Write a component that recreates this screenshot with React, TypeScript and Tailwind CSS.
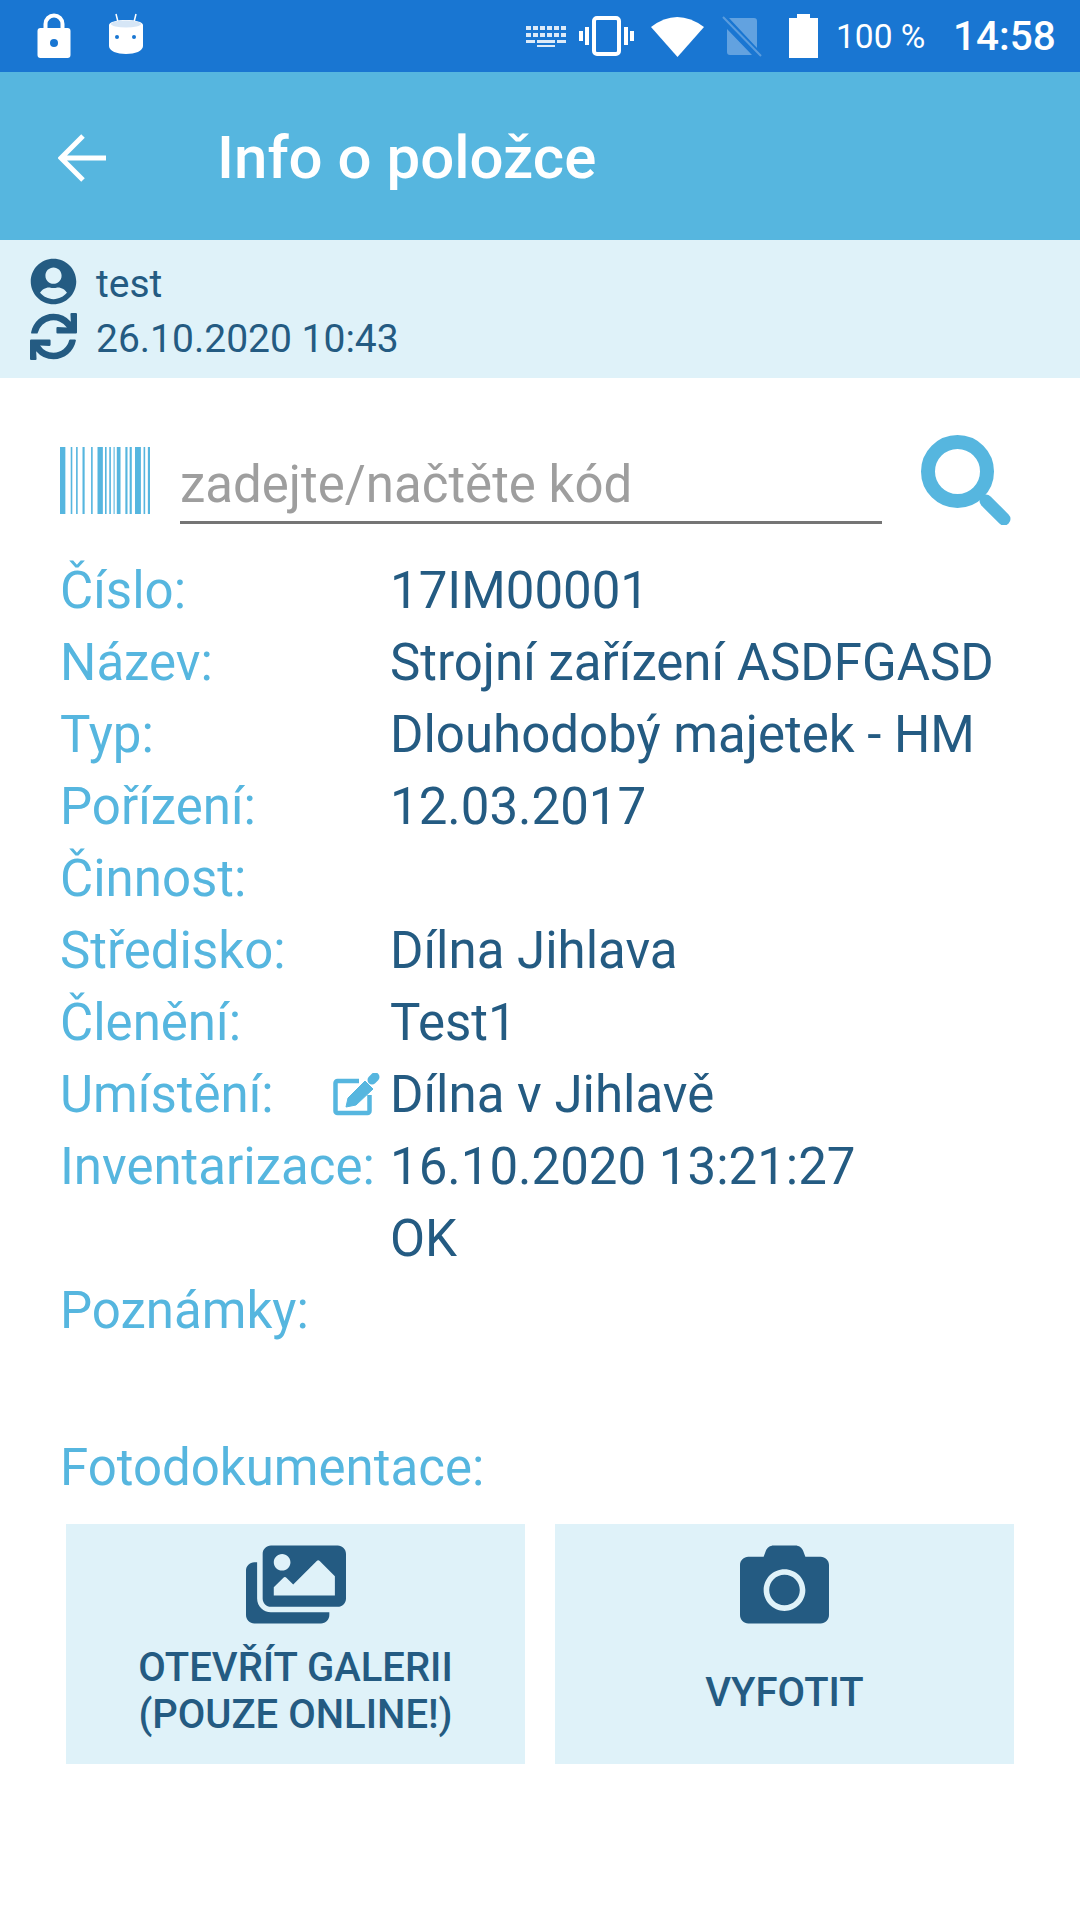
import { FaUserCircle, FaSync, FaImages, FaCamera } from 'react-icons/fa'

// bar x/width pairs of the barcode, in px from its left edge
const BARS = [[0,5],[10,1.500],[15,1.500],[21,2],[29,1.500],[35,5],[42,1.500],[46,1.500],[50,1],[53,3.500],[61,2],[65,2],[70,5.500],[78,1.500],[82,2]]

const ROWS: { label: string; value?: string; edit?: boolean }[] = [
  { label: 'Číslo:', value: '17IM00001' },
  { label: 'Název:', value: 'Strojní zařízení ASDFGASD' },
  { label: 'Typ:', value: 'Dlouhodobý majetek - HM' },
  { label: 'Pořízení:', value: '12.03.2017' },
  { label: 'Činnost:' },
  { label: 'Středisko:', value: 'Dílna Jihlava' },
  { label: 'Členění:', value: 'Test1' },
  { label: 'Umístění:', value: 'Dílna v Jihlavě', edit: true },
  { label: 'Inventarizace:', value: '16.10.2020 13:21:27' },
  { label: '', value: 'OK' },
  { label: 'Poznámky:' },
]

function StatusBar() {
  return (
    <div className="h-[72px] bg-[#1976d2] flex items-center text-white shrink-0">
      <svg className="ml-[37px] w-[34px] h-[45px] -mt-[2px]" viewBox="0 0 33 45" fill="white">
        <path d="M3 15h3v-4a10.500 10.500 0 0 1 21 0v4h3a3 3 0 0 1 3 3v24a3 3 0 0 1-3 3H3a3 3 0 0 1-3-3V18a3 3 0 0 1 3-3zM10 15h13v-4a6.500 6.500 0 0 0-13 0z" fillRule="evenodd" />
        <circle cx="16.500" cy="30" r="4" fill="#1976d2" />
      </svg>
      <svg className="ml-[38px] w-[34px] h-[41px] -mt-[6px]" viewBox="0 0 34 41">
        <path d="M7 1l2 8M27 1l-2 8" stroke="white" strokeWidth="1.500" />
        <path d="M0 12c0-3 8-5 17-5s17 2 17 5v21c0 5-8 8-17 8S0 38 0 33z" fill="white" />
        <ellipse cx="17" cy="11" rx="15" ry="3.500" fill="#d6e6f6" />
        <circle cx="8" cy="24" r="2" fill="#1976d2" />
        <circle cx="25" cy="24" r="2" fill="#1976d2" />
      </svg>
      <svg className="ml-[383px] w-[40px] h-[21px]" viewBox="0 0 40 21" fill="white" opacity="0.85">
        <path d="M0 0h5v4H0zM7 0h5v4H7zM14 0h5v4h-5zM21 0h5v4h-5zM28 0h5v4h-5zM35 0h5v4h-5zM0 7h5v4H0zM7 7h5v4H7zM14 7h5v4h-5zM21 7h5v4h-5zM28 7h5v4h-5zM35 7h5v4h-5zM0 14h9v3H0zM31 14h9v3h-9zM11 14h18v3H11zM11 19h18v2H11z" />
      </svg>
      <svg className="ml-[13px] w-[55px] h-[40px]" viewBox="0 0 55 40" fill="none" stroke="white" strokeWidth="4">
        <rect x="15" y="2" width="25" height="36" rx="3" />
        <path d="M8 11v18M2 15v10M47 11v18M53 15v10" />
      </svg>
      <svg className="ml-[17px] w-[53px] h-[41px]" viewBox="0 0 53 41" fill="white">
        <path d="M0 11Q26-9 53 11L26.500 41z" />
      </svg>
      <svg className="ml-[18px] w-[40px] h-[41px]" viewBox="0 0 40 41">
        <path d="M7 2h25a3 3 0 0 1 3 3v27zM5 13l25 26H8a3 3 0 0 1-3-3z" fill="white" opacity="0.32" />
        <path d="M1 1l38 39" stroke="white" strokeWidth="2" opacity="0.28" />
      </svg>
      <svg className="ml-[27px] w-[29px] h-[44px]" viewBox="0 0 29 44" fill="white">
        <path d="M8 0h13v4h8v40H0V4h8z" />
      </svg>
      <span className="ml-[18px] mt-[1px] text-[33.500px] leading-none font-normal w-[117px] whitespace-nowrap">100 %</span>
      <span className="mt-[1px] text-[40.500px] leading-none font-medium whitespace-nowrap">14:58</span>
    </div>
  )
}

export default function App() {
  return (
    <div className="w-[1080px] h-[1920px] bg-white flex flex-col font-['Roboto',sans-serif] overflow-hidden">
      <StatusBar />

      <div className="h-[168px] bg-[#56b6df] flex items-center shrink-0">
        <svg className="ml-[58px] w-[48px] h-[48px] mt-[3px]" viewBox="0 0 48 48" fill="none" stroke="white" strokeWidth="5">
          <path d="M48 24H4M25 2L3 24l22 22" />
        </svg>
        <span className="ml-[111px] mt-[4px] text-[60px] leading-none font-medium text-white whitespace-nowrap">Info o položce</span>
      </div>

      <div className="h-[138px] bg-[#dff2f9] pl-[30px] pt-[20px] text-[#245b82] text-[39px] leading-[48px] shrink-0">
        <div className="flex items-center h-[48px]">
          <FaUserCircle className="w-[47px] h-[47px] -mt-[5px]" />
          <span className="ml-[19px]">test</span>
        </div>
        <div className="flex items-center h-[48px] mt-[7px]">
          <FaSync className="w-[47px] h-[47px] -mt-[6px]" />
          <span className="ml-[19px]">26.10.2020 10:43</span>
        </div>
      </div>

      <div className="flex items-start pl-[60px] pt-[57px] h-[177px] shrink-0">
        <svg className="w-[90px] h-[67px] mt-[12px]" viewBox="0 0 84 67" preserveAspectRatio="none" fill="#56b6df">
          {BARS.map(([x, w]) => <rect key={x} x={x} width={w} height="67" />)}
        </svg>
        <div className="ml-[30px] w-[702px] h-[89px] border-b-[3px] border-[#757575] text-[51px] leading-[70px] pt-[15px] text-[#9e9e9e] whitespace-nowrap">zadejte/načtěte kód</div>
        <svg className="ml-[39px] w-[90px] h-[90px]" viewBox="0 0 90 90" fill="none" stroke="#56b6df">
          <circle cx="36.500" cy="36.500" r="29.500" strokeWidth="14" />
          <path d="M65 66l18 18" strokeWidth="13" strokeLinecap="round" />
        </svg>
      </div>

      <div className="pl-[60px] text-[51px] leading-[72px] shrink-0">
        {ROWS.map((r, i) => (
          <div key={i} className="flex h-[72px]">
            <div className="w-[321px] mr-[9px] flex justify-between items-center text-[#56b6df] whitespace-nowrap">
              <span>{r.label}</span>
              {r.edit && (
                <svg className="w-[48px] h-[43px] -mt-[2px]" viewBox="0 0 48 43" fill="none" stroke="#56b6df">
                  <path d="M26 8H4.500a2 2 0 0 0-2 2v28a2 2 0 0 0 2 2h30a2 2 0 0 0 2-2V22" strokeWidth="4.500" />
                  <path d="M13 34l2-9L32 8l8 8-17 16z" fill="#56b6df" strokeWidth="1" strokeLinejoin="round" />
                  <path d="M39 7l3-3" strokeWidth="9" strokeLinecap="round" />
                </svg>
              )}
            </div>
            <span className="text-[#245b82] whitespace-nowrap">{r.value}</span>
          </div>
        ))}
      </div>

      <div className="pl-[60px] mt-[85px] text-[51px] leading-[72px] text-[#56b6df] shrink-0">Fotodokumentace:</div>

      <div className="flex gap-[30px] pl-[66px] mt-[20px] shrink-0">
        <div className="w-[459px] h-[240px] bg-[#dff2f9] flex flex-col items-center text-[#245b82] font-medium text-[40px] leading-[47px] pt-[16px] text-center">
          <FaImages className="w-[100px] h-[89px] mb-[15px]" />
          <span>OTEVŘÍT GALERII<br />(POUZE ONLINE!)</span>
        </div>
        <div className="w-[459px] h-[240px] bg-[#dff2f9] flex flex-col items-center text-[#245b82] font-medium text-[40px] leading-[47px] pt-[16px] text-center">
          <FaCamera className="w-[89px] h-[89px] mb-[40px]" />
          <span>VYFOTIT</span>
        </div>
      </div>
    </div>
  )
}
